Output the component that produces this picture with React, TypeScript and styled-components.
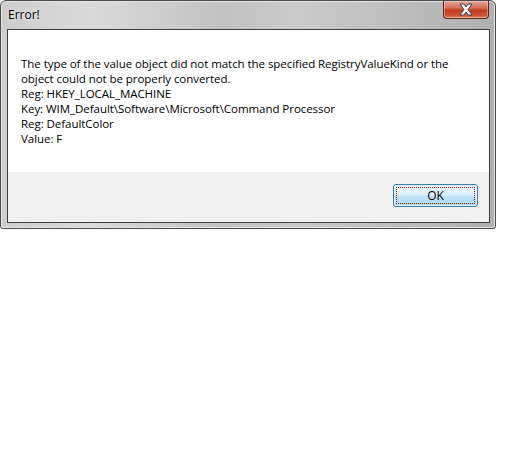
import React from 'react';
import styled, { createGlobalStyle } from 'styled-components';

const Global = createGlobalStyle`
  html, body {
    margin: 0;
    padding: 0;
    background: #fff;
  }
  body {
    font-family: "Open Sans", "Noto Sans", "Liberation Sans", sans-serif;
    font-size: 12px;
  }
`;

const Window = styled.div`
  width: 496px;
  height: 229px;
  box-sizing: border-box;
  border: 1px solid #4a4a4a;
  border-radius: 6px 6px 3px 3px;
  background: linear-gradient(90deg, #cdcdcd 0%, #dadada 18%, #c2c2c2 45%, #cbcbcb 60%, #b0b0b0 100%);
  box-shadow: inset 0 0 0 1px #e6e6e6;
  display: flex;
  flex-direction: column;
  padding: 0 5px 5px 6px;
`;

const TitleBar = styled.div`
  height: 28px;
  display: flex;
  align-items: flex-start;
  justify-content: space-between;
`;

const Title = styled.span`
  margin-top: 5px;
  margin-left: 1px;
  font-size: 12px;
  color: #000;
  text-shadow: 0 0 6px rgba(255, 255, 255, 0.9);
`;

const CloseButton = styled.div`
  width: 46px;
  height: 18px;
  margin-right: 1px;
  box-sizing: border-box;
  border: 1px solid #5b2720;
  border-top: none;
  border-radius: 0 0 4px 4px;
  background: linear-gradient(180deg, #e4a79a 0%, #d66f57 40%, #c13d1f 55%, #cf5435 85%, #e08a6b 100%);
  box-shadow: inset 0 0 0 1px rgba(255, 220, 210, 0.45);
  display: flex;
  align-items: center;
  justify-content: center;
`;

const Client = styled.div`
  flex: 1;
  border: 1px solid #3d3d3d;
  background: #fff;
  display: flex;
  flex-direction: column;
`;

const Message = styled.div`
  height: 142px;
  box-sizing: border-box;
  padding: 26px 12px 0 13px;
  line-height: 15.1px;
  color: #000;
  font-size: 11.5px;
  letter-spacing: -0.05px;
`;

const Footer = styled.div`
  flex: 1;
  background: #f0f0f0;
  display: flex;
  justify-content: flex-end;
  align-items: flex-start;
  padding: 12px 11px 0 0;
`;

const OkButton = styled.div`
  width: 85px;
  height: 23px;
  box-sizing: border-box;
  border: 1px solid #3c7fb1;
  border-radius: 3px;
  background: linear-gradient(180deg, #e9f6fd 0%, #dcf0fb 48%, #c0e4f8 52%, #a9d9f4 100%);
  box-shadow: inset 0 0 0 1px #e0f4ff;
  position: relative;
  display: flex;
  align-items: center;
  justify-content: center;
  font-size: 12px;
  color: #000;

  &::after {
    content: '';
    position: absolute;
    inset: 2px;
    border: 1px dotted #8a1f0a;
  }
`;

export default function App() {
  return (
    <>
      <Global />
      <Window>
        <TitleBar>
          <Title>Error!</Title>
          <CloseButton>
            <svg width="16" height="13" viewBox="0 0 16 13">
              <path
                d="M2 1 H6 L8 4 L10 1 H14 L10 6.5 L14 12 H10 L8 9 L6 12 H2 L6 6.5 Z"
                fill="#fff"
                stroke="#39424c"
                strokeWidth="1"
                strokeLinejoin="round"
              />
            </svg>
          </CloseButton>
        </TitleBar>
        <Client>
          <Message>
            The type of the value object did not match the specified RegistryValueKind or the
            <br />
            object could not be properly converted.
            <br />
            Reg: HKEY_LOCAL_MACHINE
            <br />
            Key: WIM_Default\Software\Microsoft\Command Processor
            <br />
            Reg: DefaultColor
            <br />
            Value: F
          </Message>
          <Footer>
            <OkButton>OK</OkButton>
          </Footer>
        </Client>
      </Window>
    </>
  );
}
